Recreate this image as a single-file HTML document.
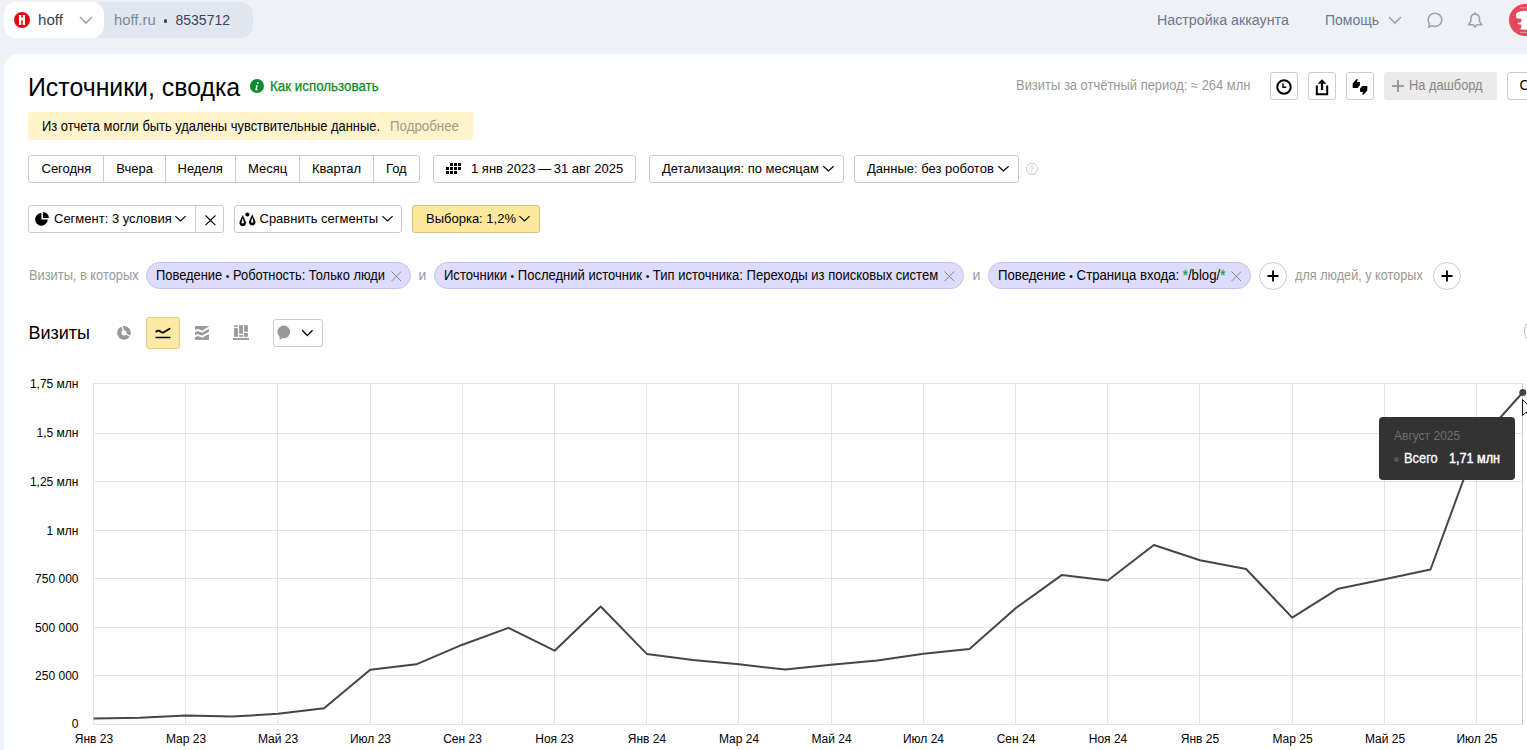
<!DOCTYPE html>
<html lang="ru">
<head>
<meta charset="utf-8">
<title>Источники, сводка — Метрика</title>
<style>
*{box-sizing:border-box;margin:0;padding:0}
html,body{width:1527px;height:750px;overflow:hidden}
body{background:#eef1f6;font-family:"Liberation Sans",sans-serif;color:#000;position:relative}
.a{position:absolute;white-space:nowrap;line-height:1}
.box{position:absolute}
.btn{position:absolute;border:1px solid #ccc;border-radius:3px;background:#fff}
svg{position:absolute;overflow:visible}
.t13{font-size:13px}
.chip{position:absolute;height:27px;top:262px;border:1px solid #c4c2f0;background:#dddcfc;border-radius:14px}
.grey{color:#999}
.bl{font-size:11px;position:relative;top:-.4px}
</style>
</head>
<body>

<!-- ===== HEADER ===== -->
<div class="box" style="left:90px;top:2px;width:163px;height:36px;background:#e1e7f1;border-radius:12px"></div>
<div class="box" style="left:4px;top:2px;width:100px;height:36px;background:#fff;border-radius:12px"></div>
<svg style="left:14px;top:11.8px" width="16" height="16" viewBox="0 0 16 16">
  <circle cx="8" cy="8" r="8" fill="#e30613"/>
  <path d="M5 3.1H7.25V5.8H8.75V3.1H11V12.9H8.75V8.2H7.25V12.9H5Z" fill="#fff"/>
</svg>
<div class="a" style="left:37.5px;top:13.3px;font-size:14px;color:#3b4254;transform:scaleX(1.08);transform-origin:0 0">hoff</div>
<svg style="left:79px;top:16px" width="14" height="8" viewBox="0 0 14 8"><path d="M1 1l6 6 6-6" fill="none" stroke="#9aa5ba" stroke-width="1.6"/></svg>
<div class="a" style="left:113.6px;top:13px;font-size:14px;color:#7d879b;transform:scaleX(1.055);transform-origin:0 0">hoff.ru</div>
<div class="box" style="left:163.5px;top:19px;width:3.5px;height:3.5px;border-radius:50%;background:#3b4254"></div>
<div class="a" style="left:175.5px;top:13px;font-size:14px;color:#3b4254">8535712</div>

<div class="a" style="left:1157px;top:13px;font-size:14px;color:#6c778d;transform:scaleX(1.018);transform-origin:0 0">Настройка аккаунта</div>
<div class="a" style="left:1325px;top:13px;font-size:14px;color:#6c778d">Помощь</div>
<svg style="left:1388px;top:16px" width="14" height="8" viewBox="0 0 14 8"><path d="M1 1l6 6 6-6" fill="none" stroke="#9aa5ba" stroke-width="1.6"/></svg>
<svg style="left:1426px;top:11px" width="18" height="18" viewBox="0 0 18 18"><path d="M9 2.2c3.8 0 6.8 2.9 6.8 6.6S12.8 15.4 9 15.4c-1 0-2-.2-2.9-.6L2.6 16.2l1-3.1C2.7 12 2.2 10.6 2.2 8.8 2.2 5.1 5.2 2.2 9 2.2z" fill="none" stroke="#9aa5ba" stroke-width="1.6" stroke-linejoin="round"/></svg>
<svg style="left:1466px;top:11px" width="18" height="18" viewBox="0 0 18 18"><path d="M9.15 1.3V3.1M9.15 3.1C6.5 3.1 4.8 5.1 4.8 7.8V10.4L2.5 13.8H7.3L9.15 16.1 11 13.8H15.8L13.5 10.4V7.8C13.5 5.1 11.8 3.1 9.15 3.1Z" fill="none" stroke="#9aa5ba" stroke-width="1.6" stroke-linejoin="round"/></svg>
<svg style="left:1509px;top:4px" width="32" height="32" viewBox="0 0 32 32">
  <circle cx="16" cy="16" r="16" fill="#e4485b"/>
  <ellipse cx="16" cy="11" rx="9.2" ry="4.2" fill="#fff"/>
  <circle cx="9.6" cy="12" r="2.6" fill="#fff"/>
  <rect x="12.3" y="13" width="7.4" height="12.5" fill="#fff"/>
  <ellipse cx="16" cy="19.5" rx="7.6" ry="1.5" fill="#fff"/>
  <path d="M10.5 25.2C12 23.8 13.5 23.4 16 23.4s4 .4 5.5 1.8z" fill="#fff"/>
  <path d="M11 3.8h10M11 28.4h10" stroke="#ee98a2" stroke-width="1"/>
</svg>

<!-- ===== CARD ===== -->
<div class="box" style="left:4px;top:54px;width:1600px;height:800px;background:#fff;border-radius:14px 0 0 0"></div>

<!-- title row -->
<div class="a" style="left:27.6px;top:73.9px;font-size:26px;color:#000;transform:scaleX(.956);transform-origin:0 0">Источники, сводка</div>
<svg style="left:250px;top:78.8px" width="14" height="14" viewBox="0 0 14 14"><circle cx="7" cy="7" r="7" fill="#0b8a30"/><path d="M7.9 3.1a.85.85 0 1 1 0 1.7.85.85 0 0 1 0-1.7zM5.6 6.4l2.3-.4-1.2 4.6c.5 0 .9-.3 1.2-.6l.2.2c-.5.8-1.3 1.2-2.1 1.2-.6 0-.8-.4-.7-.9l1-3.8-.7.1z" fill="#fff"/></svg>
<div class="a" style="left:269.5px;top:79.2px;font-size:14px;color:#078a24;-webkit-text-stroke:.25px #078a24;transform:scaleX(.955);transform-origin:0 0">Как использовать</div>

<div class="a" style="left:1015.6px;top:78px;font-size:14px;color:#999;transform:scaleX(.925);transform-origin:0 0">Визиты за отчётный период: ≈ 264 млн</div>
<div class="btn" style="left:1270px;top:72px;width:28px;height:28px"></div>
<svg style="left:1276px;top:79px" width="16" height="16" viewBox="0 0 16 16"><circle cx="8" cy="8" r="6.7" fill="none" stroke="#000" stroke-width="2"/><path d="M7 4.3v4h3.3" fill="none" stroke="#000" stroke-width="1.4"/></svg>
<div class="btn" style="left:1308px;top:72px;width:28px;height:28px"></div>
<svg style="left:1314px;top:78px" width="16" height="18" viewBox="0 0 16 18"><path d="M8 1.2l-4.4 4.6H6.9v6.2h2.2V5.8h3.3z" fill="#000"/><path d="M2.8 7.5v8.8h10.4V7.5" fill="none" stroke="#000" stroke-width="2"/></svg>
<div class="btn" style="left:1346px;top:72px;width:28px;height:28px"></div>
<svg style="left:1348px;top:74px" width="24" height="24" viewBox="0 0 24 24"><path id="thu" d="M4.7 9.4L8 5.5Q8.7 4.7 9.4 5.2L9.8 5.8L8.9 7.9H11.9V11.3L9.6 13.9H4.7Z" fill="#000"/><path d="M4.7 9.4L8 5.5Q8.7 4.7 9.4 5.2L9.8 5.8L8.9 7.9H11.9V11.3L9.6 13.9H4.7Z" transform="rotate(180 12 12.9)" fill="#000"/></svg>
<div class="box" style="left:1384px;top:72px;width:113px;height:28px;background:#ebebeb;border-radius:3px"></div>
<svg style="left:1391px;top:79px" width="14" height="14" viewBox="0 0 14 14"><path d="M7 1v12M1 7h12" stroke="#888" stroke-width="1.6"/></svg>
<div class="a" style="left:1408.5px;top:78px;font-size:14px;color:#888;transform:scaleX(.915);transform-origin:0 0">На дашборд</div>
<div class="btn" style="left:1507px;top:72px;width:60px;height:28px"></div>
<div class="a" style="left:1519.5px;top:78.3px;font-size:14px;color:#000">С</div>

<!-- banner -->
<div class="box" style="left:28px;top:112px;width:445px;height:28px;background:#fff4cc;border-radius:3px"></div>
<div class="a" style="left:41.5px;top:119px;font-size:14px;color:#000;transform:scaleX(.922);transform-origin:0 0">Из отчета могли быть удалены чувствительные данные.</div>
<div class="a" style="left:390px;top:119px;font-size:14px;color:#a39a85;transform:scaleX(.95);transform-origin:0 0">Подробнее</div>

<!-- period row -->
<div class="btn" style="left:28px;top:155px;width:392px;height:28px"></div>
<div class="box" style="left:103px;top:155px;width:1px;height:28px;background:#ccc"></div>
<div class="box" style="left:165px;top:155px;width:1px;height:28px;background:#ccc"></div>
<div class="box" style="left:235px;top:155px;width:1px;height:28px;background:#ccc"></div>
<div class="box" style="left:299px;top:155px;width:1px;height:28px;background:#ccc"></div>
<div class="box" style="left:373px;top:155px;width:1px;height:28px;background:#ccc"></div>
<div class="a t13" style="left:41.5px;top:162.2px">Сегодня</div>
<div class="a t13" style="left:116.3px;top:162.2px">Вчера</div>
<div class="a t13" style="left:177.5px;top:162.2px">Неделя</div>
<div class="a t13" style="left:248px;top:162.2px">Месяц</div>
<div class="a t13" style="left:312px;top:162.2px">Квартал</div>
<div class="a t13" style="left:386px;top:162.2px">Год</div>

<div class="btn" style="left:433px;top:155px;width:203px;height:28px"></div>
<svg style="left:446px;top:163px" width="15" height="11" viewBox="0 0 15 11" fill="#000"><rect x="4" y="0" width="3" height="3"/><rect x="8" y="0" width="3" height="3"/><rect x="12" y="0" width="3" height="3"/><rect x="0" y="4" width="3" height="3"/><rect x="4" y="4" width="3" height="3"/><rect x="8" y="4" width="3" height="3"/><rect x="12" y="4" width="3" height="3"/><rect x="0" y="8" width="3" height="3"/><rect x="4" y="8" width="3" height="3"/><rect x="8" y="8" width="3" height="3"/></svg>
<div class="a t13" style="left:471px;top:162.2px">1 янв 2023<span style="letter-spacing:-1px"> </span>—<span style="letter-spacing:-1px"> </span>31 авг 2025</div>

<div class="btn" style="left:649px;top:155px;width:195px;height:28px"></div>
<div class="a t13" style="left:662px;top:162.2px">Детализация: по месяцам</div>
<svg style="left:823px;top:165px" width="11" height="7" viewBox="0 0 11 7"><path d="M.4 1.2L5.5 5.9 10.6 1.2" fill="none" stroke="#000" stroke-width="1.25"/></svg>
<div class="btn" style="left:854px;top:155px;width:165px;height:28px"></div>
<div class="a t13" style="left:867px;top:162.2px">Данные: без роботов</div>
<svg style="left:998px;top:165px" width="11" height="7" viewBox="0 0 11 7"><path d="M.4 1.2L5.5 5.9 10.6 1.2" fill="none" stroke="#000" stroke-width="1.25"/></svg>
<svg style="left:1026px;top:163px" width="12" height="12" viewBox="0 0 12 12"><circle cx="6" cy="6" r="5.5" fill="none" stroke="#ccc" stroke-width="1"/><path d="M4.2 4.7C4.2 3.6 5 3 5.9 3S7.6 3.6 7.6 4.5C7.6 5.6 6 5.7 5.9 7.1" fill="none" stroke="#c4c4c4" stroke-width="1"/><circle cx="5.9" cy="8.7" r=".6" fill="#c4c4c4"/></svg>

<!-- segment row -->
<div class="btn" style="left:28px;top:205px;width:196px;height:28px"></div>
<div class="box" style="left:195px;top:205px;width:1px;height:28px;background:#ccc"></div>
<svg style="left:30px;top:208px" width="24" height="22" viewBox="0 0 24 22"><path d="M11.4 5.1V11.4H17.7A6.3 6.3 0 1 1 11.4 5.1Z" fill="#000"/><path d="M12.9 4A6 6 0 0 1 18.9 10H12.9Z" fill="#000"/></svg>
<div class="a t13" style="left:54px;top:211.8px">Сегмент: 3 условия</div>
<svg style="left:174.7px;top:214.8px" width="11" height="7" viewBox="0 0 11 7"><path d="M.4 1.2L5.5 5.9 10.6 1.2" fill="none" stroke="#000" stroke-width="1.15"/></svg>
<svg style="left:204.5px;top:214.5px" width="12" height="12" viewBox="0 0 12 12"><path d="M.5 .5L10.4 10.1M10.4 .5L.5 10.1" stroke="#000" stroke-width="1.1"/></svg>

<div class="btn" style="left:234px;top:205px;width:168px;height:28px"></div>
<svg style="left:236px;top:208px" width="24" height="22" viewBox="0 0 24 22"><path fill-rule="evenodd" d="M6.7 7L3.45 14.3A3.3 3.3 0 1 0 9.95 14.3ZM6.7 10.1L5.3 15.3H8.1Z" fill="#000"/><path fill-rule="evenodd" d="M16.2 6.2L12.95 13.5A3.3 3.3 0 1 0 19.45 13.5ZM16.2 9.3L14.8 14.5H17.6Z" fill="#000"/><circle cx="11.4" cy="6.5" r="2.1" fill="#000"/></svg>
<div class="a t13" style="left:259.5px;top:211.8px">Сравнить сегменты</div>
<svg style="left:381.6px;top:214.8px" width="11" height="7" viewBox="0 0 11 7"><path d="M.4 1.2L5.5 5.9 10.6 1.2" fill="none" stroke="#000" stroke-width="1.15"/></svg>

<div class="box" style="left:412px;top:205px;width:128px;height:28px;background:#fee89c;border:1px solid #d6c27c;border-radius:3px"></div>
<div class="a t13" style="left:426px;top:211.8px">Выборка: 1,2%</div>
<svg style="left:519.2px;top:214.8px" width="11" height="7" viewBox="0 0 11 7"><path d="M.4 1.2L5.5 5.9 10.6 1.2" fill="none" stroke="#000" stroke-width="1.15"/></svg>

<!-- filter chips -->
<div class="a grey" style="left:28.5px;top:268px;font-size:14px;transform:scaleX(.916);transform-origin:0 0">Визиты, в которых</div>
<div class="chip" style="left:146px;width:265px"></div>
<div class="a" style="left:156.4px;top:268px;font-size:14px;transform:scaleX(.921);transform-origin:0 0">Поведение <span class="bl">•</span> Роботность: Только люди</div>
<svg style="left:390.5px;top:271px" width="11" height="11" viewBox="0 0 11 11"><path d="M.5 .5l9.6 9.6M10.1 .5l-9.6 9.6" stroke="#777" stroke-width=".9"/></svg>
<div class="a grey" style="left:418.5px;top:268px;font-size:14px">и</div>
<div class="chip" style="left:433.5px;width:530px"></div>
<div class="a" style="left:444.4px;top:268px;font-size:14px;transform:scaleX(.931);transform-origin:0 0">Источники <span class="bl">•</span> Последний источник <span class="bl">•</span> Тип источника: Переходы из поисковых систем</div>
<svg style="left:943.5px;top:271px" width="11" height="11" viewBox="0 0 11 11"><path d="M.5 .5l9.6 9.6M10.1 .5l-9.6 9.6" stroke="#777" stroke-width=".9"/></svg>
<div class="a grey" style="left:972.5px;top:268px;font-size:14px">и</div>
<div class="chip" style="left:988px;width:263px"></div>
<div class="a" style="left:998.4px;top:268px;font-size:14px;transform:scaleX(.941);transform-origin:0 0">Поведение <span class="bl">•</span> Страница входа: <span style="color:#1aa034;-webkit-text-stroke:.3px #1aa034">*</span>/blog/<span style="color:#1aa034;-webkit-text-stroke:.3px #1aa034">*</span></div>
<svg style="left:1230.5px;top:271px" width="11" height="11" viewBox="0 0 11 11"><path d="M.5 .5l9.6 9.6M10.1 .5l-9.6 9.6" stroke="#777" stroke-width=".9"/></svg>
<div class="box" style="left:1259px;top:262px;width:28px;height:28px;border:1px solid #ccc;border-radius:50%;background:#fff"></div>
<svg style="left:1266px;top:269px" width="14" height="14" viewBox="0 0 14 14"><path d="M7 1.5v11M1.5 7h11" stroke="#000" stroke-width="1.8"/></svg>
<div class="a grey" style="left:1295px;top:268px;font-size:14px;transform:scaleX(.904);transform-origin:0 0">для людей, у которых</div>
<div class="box" style="left:1433px;top:262px;width:28px;height:28px;border:1px solid #ccc;border-radius:50%;background:#fff"></div>
<svg style="left:1440px;top:269px" width="14" height="14" viewBox="0 0 14 14"><path d="M7 1.5v11M1.5 7h11" stroke="#000" stroke-width="1.8"/></svg>

<!-- visits heading -->
<div class="a" style="left:28.5px;top:323.5px;font-size:18px;color:#000">Визиты</div>
<svg style="left:112px;top:320px" width="24" height="26" viewBox="0 0 24 26"><circle cx="12" cy="12.8" r="4.75" fill="none" stroke="#999" stroke-width="4.3"/><path d="M12 12.8L9.5 4.8M12 12.8L19.3 17" stroke="#fff" stroke-width="1.3"/></svg>
<div class="box" style="left:146px;top:317px;width:34px;height:32px;background:#fee9a6;border:1px solid #e5cd7e;border-radius:3px"></div>
<svg style="left:150px;top:320px" width="26" height="26" viewBox="0 0 26 26"><path d="M6.3 11.5C7.6 10.2 8.8 10.3 10.2 11.3C11.6 12.4 12.3 13.1 13.3 12.5L19.6 8.7" fill="none" stroke="#000" stroke-width="1.8" stroke-linecap="round"/><path d="M6.1 17.4H19.9" stroke="#000" stroke-width="1.45" stroke-linecap="round"/></svg>
<svg style="left:190px;top:320px" width="26" height="26" viewBox="0 0 26 26"><rect x="5" y="6.07" width="13.9" height="13.83" fill="#999"/><path d="M4 11.3L5 11 8 10 12.1 11.7 19.5 7.3M4 16.3L5 16 8 15.1 12.1 16.7 19.5 12.6" fill="none" stroke="#fff" stroke-width="1.9" stroke-linejoin="round"/></svg>
<svg style="left:228px;top:320px" width="26" height="26" viewBox="0 0 26 26" fill="#999"><rect x="6.07" y="5.2" width="3.83" height="1.56"/><rect x="6.07" y="8.1" width="3.83" height="8.7"/><rect x="11.1" y="5.2" width="3.8" height="8.5"/><rect x="11.1" y="15.1" width="3.8" height="1.7"/><rect x="16.1" y="5.2" width="3.8" height="6.6"/><rect x="16.1" y="13" width="3.8" height="3.8"/><rect x="5" y="18" width="16" height="1.9"/></svg>
<div class="btn" style="left:273px;top:319px;width:50px;height:28px"></div>
<svg style="left:270px;top:316px" width="30" height="30" viewBox="0 0 30 30"><circle cx="13.8" cy="15.9" r="6.35" fill="#999"/><path d="M10 19.5L9.5 23.7 14 21.5z" fill="#999"/></svg>
<svg style="left:300px;top:328px" width="15" height="10" viewBox="0 0 15 10"><path d="M2.2 2.3L7.4 7.5 12.6 2.3" fill="none" stroke="#000" stroke-width="1.3"/></svg>
<div class="box" style="left:1524px;top:318px;width:26px;height:26px;border:1.3px solid #bbb;border-radius:50%"></div>

<!-- ===== CHART ===== -->
<svg id="chart" style="left:0;top:0" width="1527" height="750" viewBox="0 0 1527 750">
  <g stroke="#e5e5e5" stroke-width="1" shape-rendering="crispEdges">
    <path d="M93.5 383.5H1523M93.5 433.5H1523M93.5 481.5H1523M93.5 530.5H1523M93.5 578.5H1523M93.5 627.5H1523M93.5 675.5H1523"/>
    <path d="M93.5 383V724M185.5 383V724M277.5 383V724M370.5 383V724M462.5 383V724M554.5 383V724M646.5 383V724M738.5 383V724M831.5 383V724M923.5 383V724M1015.5 383V724M1107.5 383V724M1199.5 383V724M1292.5 383V724M1384.5 383V724M1476.5 383V724"/>
    <path d="M93 724.5H1523"/>
  </g>
  <path d="M1522.5 383V725" stroke="#ccc" stroke-width="1" shape-rendering="crispEdges"/>
  <polyline fill="none" stroke="#464646" stroke-width="2" stroke-linejoin="round" points="93.6,718.5 139.7,717.7 185.8,715.6 231.9,716.6 278,713.8 324.1,708.3 370.2,669.8 416.3,664.3 462.4,644.7 508.5,627.9 554.6,650.7 600.7,606.5 646.8,653.9 692.9,659.9 739,664.3 785.1,669.6 831.2,664.7 877.3,660.5 923.4,653.8 969.5,649 1015.6,608.2 1061.7,575.1 1107.8,580.5 1153.9,545 1200,560.2 1246.1,569 1292.2,617.6 1338.3,588.7 1384.4,579.3 1430.5,569.5 1476.6,444 1522.7,392.5"/>
  <circle cx="1522.8" cy="392.4" r="3.5" fill="#444"/>
  <g font-family="Liberation Sans" font-size="12" fill="#000" text-anchor="end">
    <text x="78.5" y="388">1,75 млн</text>
    <text x="78.5" y="437">1,5 млн</text>
    <text x="78.5" y="485.5">1,25 млн</text>
    <text x="78.5" y="534.5">1 млн</text>
    <text x="78.5" y="582.5">750 000</text>
    <text x="78.5" y="631.5">500 000</text>
    <text x="78.5" y="679.5">250 000</text>
    <text x="78.5" y="728">0</text>
  </g>
  <g font-family="Liberation Sans" font-size="12" fill="#000" text-anchor="middle">
    <text x="94" y="743">Янв 23</text>
    <text x="186" y="743">Мар 23</text>
    <text x="278" y="743">Май 23</text>
    <text x="370.5" y="743">Июл 23</text>
    <text x="462.5" y="743">Сен 23</text>
    <text x="554.5" y="743">Ноя 23</text>
    <text x="647" y="743">Янв 24</text>
    <text x="739" y="743">Мар 24</text>
    <text x="831.5" y="743">Май 24</text>
    <text x="923.5" y="743">Июл 24</text>
    <text x="1016" y="743">Сен 24</text>
    <text x="1108" y="743">Ноя 24</text>
    <text x="1200" y="743">Янв 25</text>
    <text x="1292.5" y="743">Мар 25</text>
    <text x="1385" y="743">Май 25</text>
    <text x="1477" y="743">Июл 25</text>
  </g>
</svg>

<!-- tooltip -->
<div class="box" style="left:1379px;top:417px;width:136px;height:63px;background:#333;border-radius:4px"></div>
<div class="a" style="left:1394px;top:430px;font-size:12px;color:#6e6e6e">Август 2025</div>
<div class="box" style="left:1394px;top:456.5px;width:5px;height:5px;border-radius:50%;background:#555"></div>
<div class="a" style="left:1403.6px;top:451.4px;font-size:14px;color:#fff;-webkit-text-stroke:.3px #fff;transform:scaleX(.92);transform-origin:0 0">Всего</div>
<div class="a" style="left:1448.6px;top:451.4px;font-size:14px;color:#fff;-webkit-text-stroke:.45px #fff;transform:scaleX(.9);transform-origin:0 0">1,71 млн</div>

<!-- cursor -->
<svg style="left:1521.9px;top:398.7px" width="14" height="22" viewBox="0 0 14 22"><path d="M.5 .5V16.6L4.4 13 7 18.8 9.3 17.8 6.8 12.2H12.2Z" fill="#fff" stroke="#141428" stroke-width="1" stroke-linejoin="round"/></svg>

</body>
</html>
